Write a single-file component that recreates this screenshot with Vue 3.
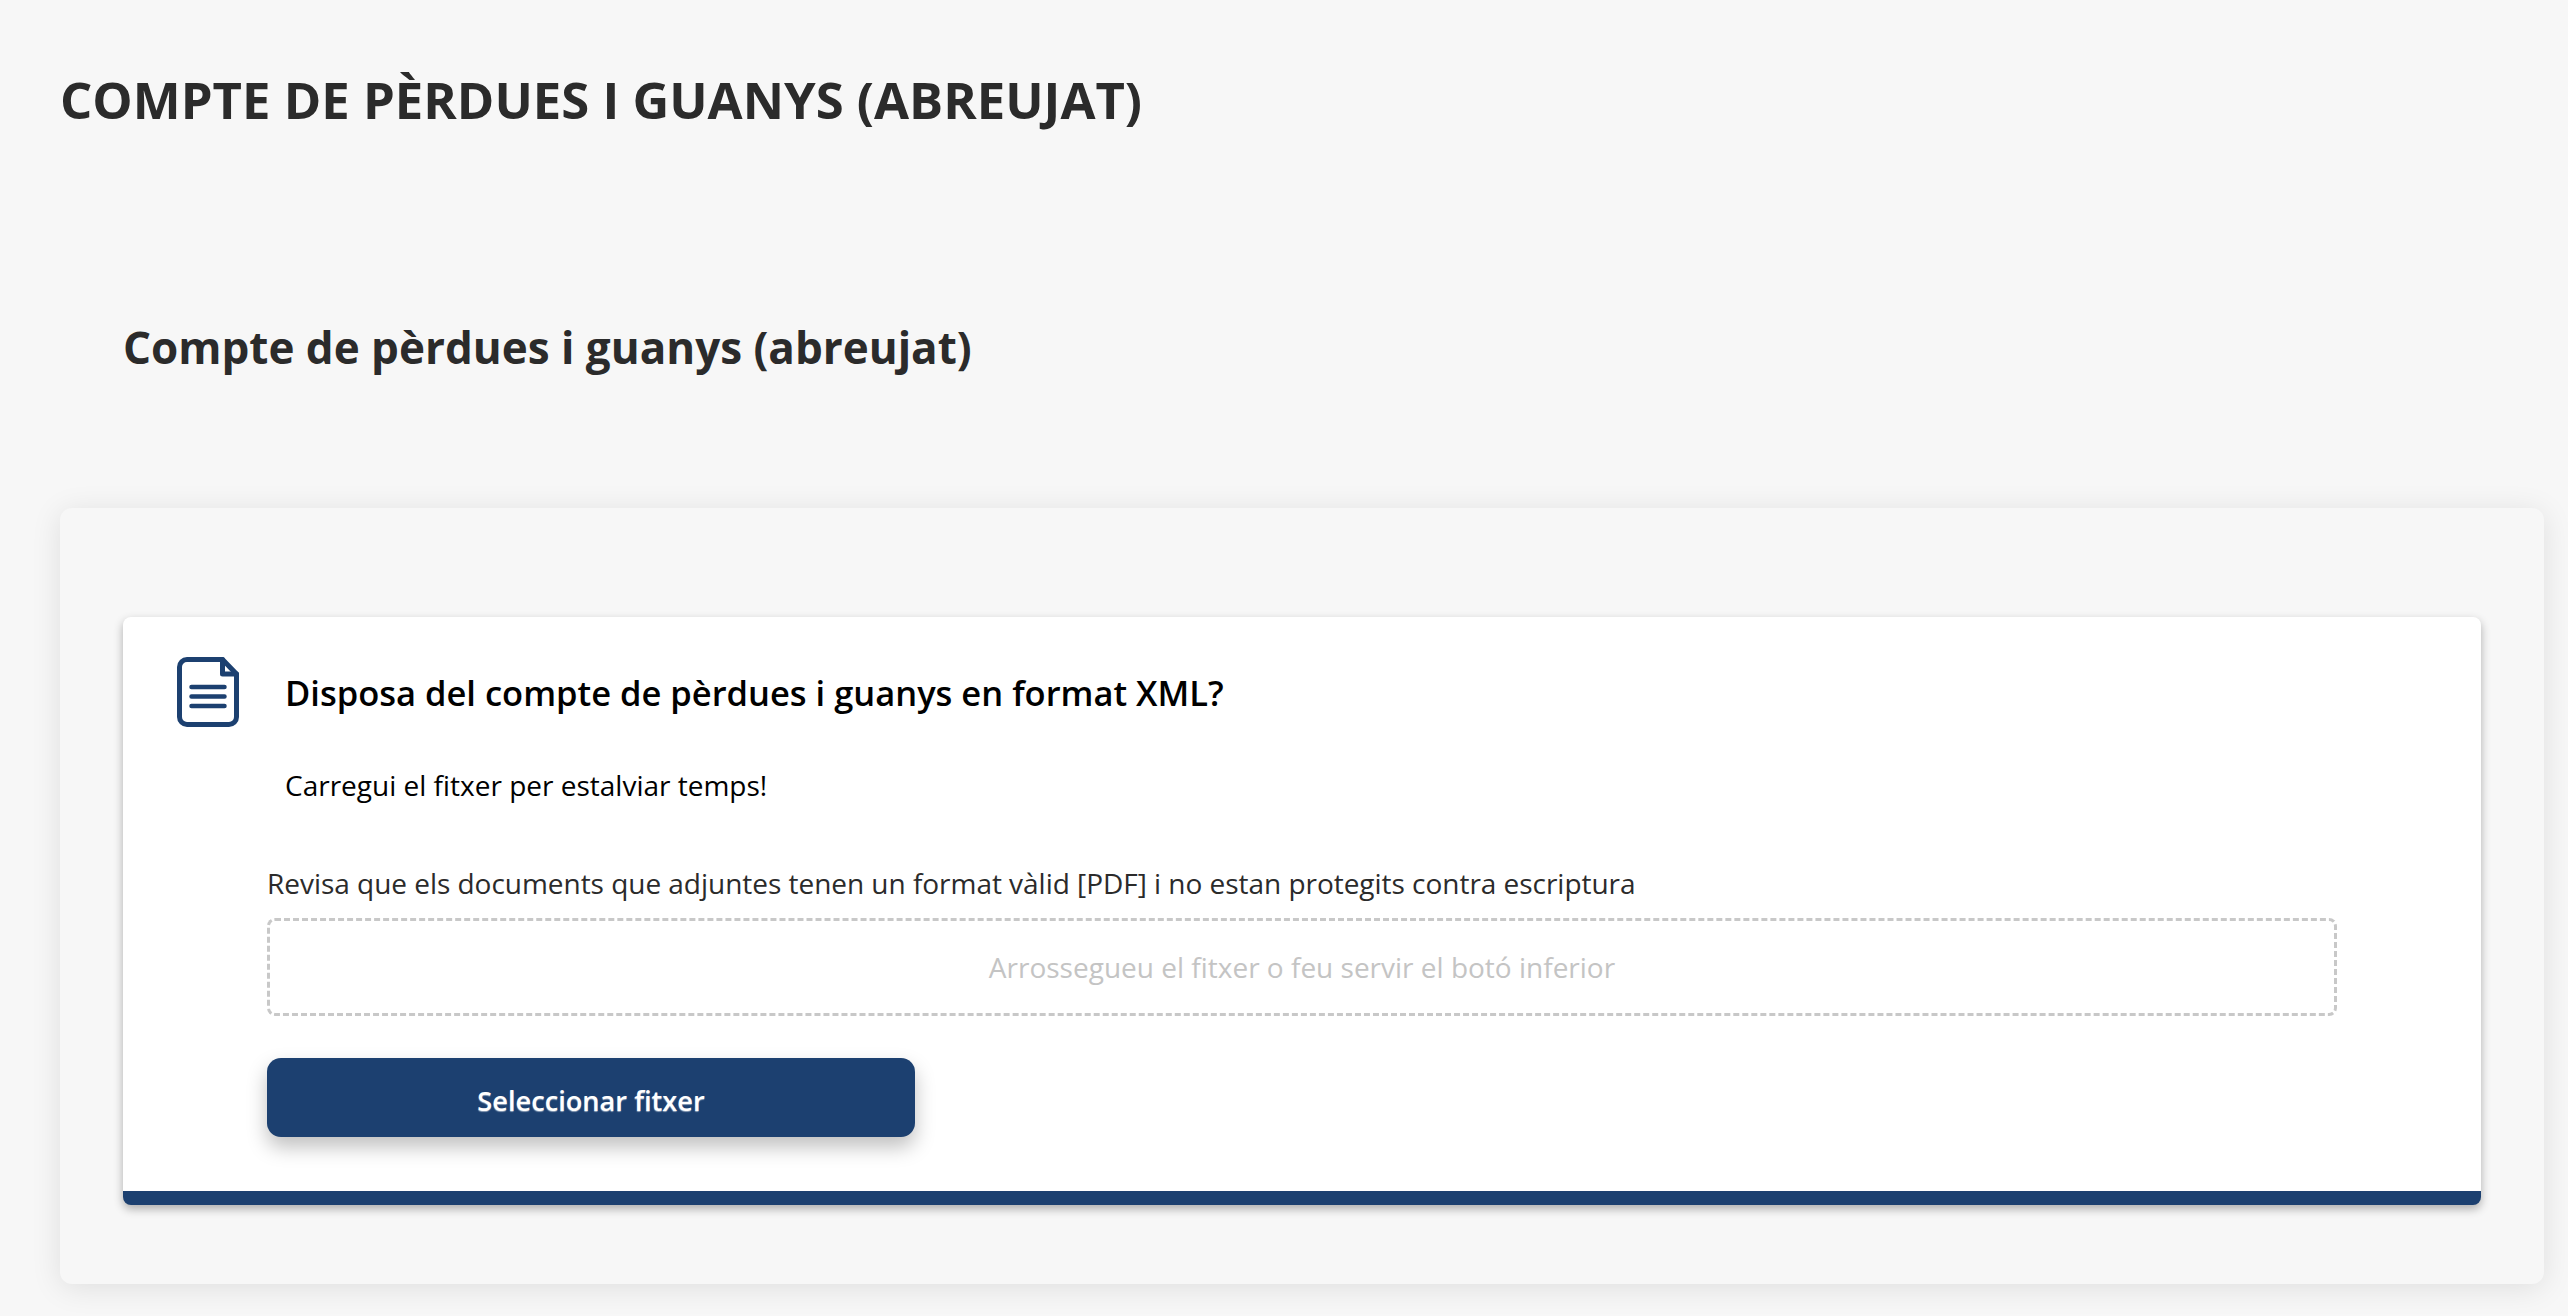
<script setup>
const hint = 'Revisa que els documents que adjuntes tenen un format vàlid [PDF] i no estan protegits contra escriptura'
</script>

<template>
  <main class="page">
    <h1 class="title">COMPTE DE PÈRDUES I GUANYS (ABREUJAT)</h1>
    <h2 class="subtitle">Compte de pèrdues i guanys (abreujat)</h2>
    <section class="outer">
      <article class="card">
        <div class="head">
          <svg class="doc" width="62" height="70" viewBox="0 0 62 70" fill="none" stroke="#1c4070" stroke-linecap="round" stroke-linejoin="round">
            <path stroke-width="5" d="M10 2.5H45.5L59.5 17V60a7.5 7.5 0 0 1-7.5 7.5H10A7.5 7.5 0 0 1 2.5 60V10A7.5 7.5 0 0 1 10 2.5Z" />
            <path stroke-width="5" d="M45.5 2.5V17H59.5" />
            <path stroke-width="4.5" d="M14.5 30H47.5M14.5 39.5H47.5M14.5 49H47.5" />
          </svg>
          <h3 class="question">Disposa del compte de pèrdues i guanys en format XML?</h3>
        </div>
        <p class="lead">Carregui el fitxer per estalviar temps!</p>
        <div class="upload">
          <p class="hint">{{ hint }}</p>
          <div class="drop">Arrossegueu el fitxer o feu servir el botó inferior</div>
          <button class="btn" type="button">Seleccionar fitxer</button>
        </div>
      </article>
    </section>
  </main>
</template>

<style>
html, body { margin: 0; background: #f7f7f7; overflow: hidden; }
</style>

<style scoped>
.page {
  box-sizing: border-box;
  width: 2568px;
  height: 1316px;
  padding: 0 24px 0 60px;
  background: #f7f7f7;
  font-family: "Open Sans", "Noto Sans", sans-serif;
  overflow: hidden;
}
.title {
  margin: 0;
  padding-top: 64px;
  height: 72px;
  line-height: 72px;
  font-size: 50.8px;
  font-weight: 700;
  color: #2b2b2b;
  white-space: nowrap;
}
.subtitle {
  margin: 0;
  padding: 175px 0 0 63px;
  height: 72px;
  line-height: 72px;
  font-size: 44px;
  font-weight: 700;
  color: #2b2b2b;
  white-space: nowrap;
}
.outer {
  box-sizing: border-box;
  margin-top: 125px;
  height: 776px;
  padding: 109px 63px 0;
  border-radius: 12px;
  background: #f7f7f7;
  box-shadow: 0 4px 30px rgba(0, 0, 0, 0.1);
}
.card {
  box-sizing: border-box;
  height: 588px;
  background: #fff;
  border-bottom: 14px solid #1c4070;
  border-radius: 8px;
  box-shadow: 0 4px 10px rgba(0, 0, 0, 0.3);
}
.head {
  display: flex;
  align-items: center;
  padding: 40px 0 0 54px;
  height: 70px;
}
.doc { flex: none; }
.question {
  margin: 0 0 0 46px;
  font-size: 34.5px;
  font-weight: 600;
  color: #000;
  white-space: nowrap;
}
.lead {
  margin: 0;
  padding: 36px 0 0 162px;
  height: 44px;
  line-height: 44px;
  font-size: 28px;
  color: #000;
}
.upload { padding: 0 144px; }
.hint {
  margin: 0;
  padding-top: 54px;
  height: 44px;
  line-height: 44px;
  font-size: 28px;
  letter-spacing: -0.03px;
  color: #2b2b2b;
  white-space: nowrap;
}
.drop {
  box-sizing: border-box;
  margin-top: 13px;
  height: 98px;
  line-height: 92px;
  border: 3px dashed #c8c8c8;
  border-radius: 8px;
  text-align: center;
  font-size: 28px;
  color: #c4c4c4;
}
.btn {
  display: block;
  width: 648px;
  height: 79px;
  margin-top: 42px;
  padding: 6px 0 0;
  border: 0;
  border-radius: 14px;
  background: #1c4070;
  color: #fff;
  font-family: inherit;
  font-size: 27.2px;
  font-weight: 600;
  text-shadow: 0 1px 1px rgba(255, 255, 255, 0.5);
  box-shadow: 0 10px 20px rgba(0, 0, 0, 0.25);
}
</style>
